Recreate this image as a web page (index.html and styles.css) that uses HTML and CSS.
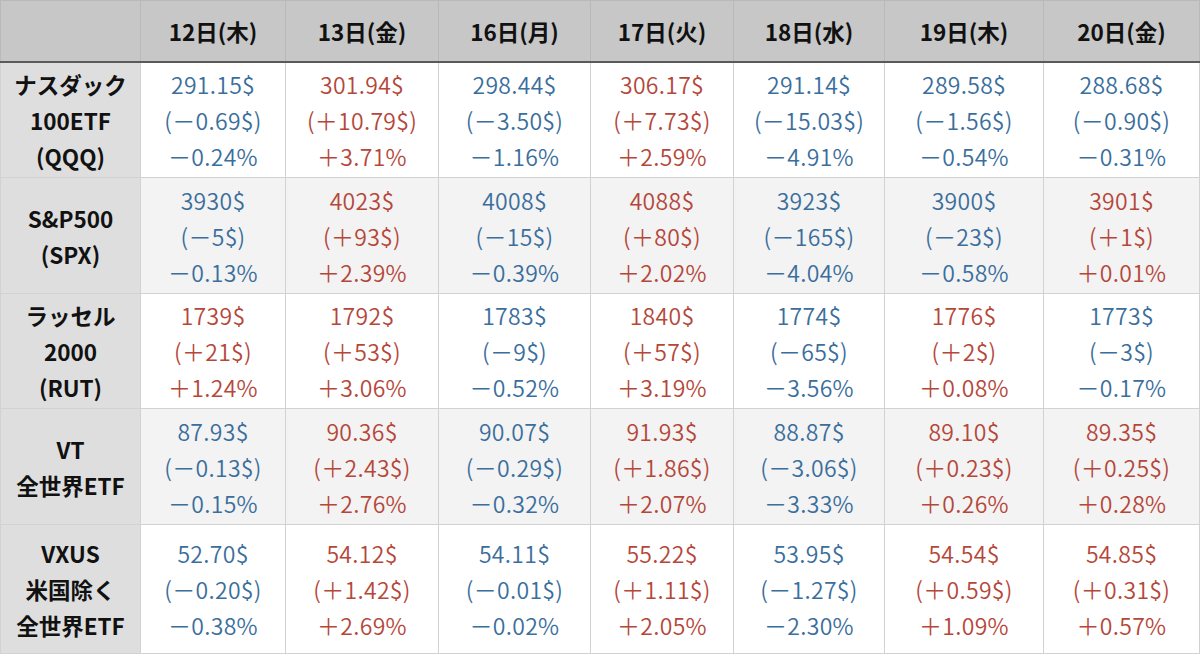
FILE: index.html
```html
<!DOCTYPE html>
<html lang="ja">
<head>
<meta charset="utf-8">
<link rel="stylesheet" href="styles.css">
</head>
<body>
<table class="grid">
<colgroup>
<col class="c0"><col class="c1"><col class="c2"><col class="c3"><col class="c4"><col class="c5"><col class="c6"><col class="c7">
</colgroup>
<thead>
<tr class="head">
<th class="corner"></th>
<th>12日(木)</th><th>13日(金)</th><th>16日(月)</th><th>17日(火)</th><th>18日(水)</th><th>19日(木)</th><th>20日(金)</th>
</tr>
</thead>
<tbody>
<tr class="r1">
<th class="label">ナスダック<br>100ETF<br>(QQQ)</th>
<td class="dn">291.15$<br>(－0.69$)<br>－0.24%</td>
<td class="up">301.94$<br>(＋10.79$)<br>＋3.71%</td>
<td class="dn">298.44$<br>(－3.50$)<br>－1.16%</td>
<td class="up">306.17$<br>(＋7.73$)<br>＋2.59%</td>
<td class="dn">291.14$<br>(－15.03$)<br>－4.91%</td>
<td class="dn">289.58$<br>(－1.56$)<br>－0.54%</td>
<td class="dn">288.68$<br>(－0.90$)<br>－0.31%</td>
</tr>
<tr class="r2 alt">
<th class="label">S&amp;P500<br>(SPX)</th>
<td class="dn">3930$<br>(－5$)<br>－0.13%</td>
<td class="up">4023$<br>(＋93$)<br>＋2.39%</td>
<td class="dn">4008$<br>(－15$)<br>－0.39%</td>
<td class="up">4088$<br>(＋80$)<br>＋2.02%</td>
<td class="dn">3923$<br>(－165$)<br>－4.04%</td>
<td class="dn">3900$<br>(－23$)<br>－0.58%</td>
<td class="up">3901$<br>(＋1$)<br>＋0.01%</td>
</tr>
<tr class="r3">
<th class="label">ラッセル<br>2000<br>(RUT)</th>
<td class="up">1739$<br>(＋21$)<br>＋1.24%</td>
<td class="up">1792$<br>(＋53$)<br>＋3.06%</td>
<td class="dn">1783$<br>(－9$)<br>－0.52%</td>
<td class="up">1840$<br>(＋57$)<br>＋3.19%</td>
<td class="dn">1774$<br>(－65$)<br>－3.56%</td>
<td class="up">1776$<br>(＋2$)<br>＋0.08%</td>
<td class="dn">1773$<br>(－3$)<br>－0.17%</td>
</tr>
<tr class="r4 alt">
<th class="label">VT<br>全世界ETF</th>
<td class="dn">87.93$<br>(－0.13$)<br>－0.15%</td>
<td class="up">90.36$<br>(＋2.43$)<br>＋2.76%</td>
<td class="dn">90.07$<br>(－0.29$)<br>－0.32%</td>
<td class="up">91.93$<br>(＋1.86$)<br>＋2.07%</td>
<td class="dn">88.87$<br>(－3.06$)<br>－3.33%</td>
<td class="up">89.10$<br>(＋0.23$)<br>＋0.26%</td>
<td class="up">89.35$<br>(＋0.25$)<br>＋0.28%</td>
</tr>
<tr class="r5">
<th class="label">VXUS<br>米国除く<br>全世界ETF</th>
<td class="dn">52.70$<br>(－0.20$)<br>－0.38%</td>
<td class="up">54.12$<br>(＋1.42$)<br>＋2.69%</td>
<td class="dn">54.11$<br>(－0.01$)<br>－0.02%</td>
<td class="up">55.22$<br>(＋1.11$)<br>＋2.05%</td>
<td class="dn">53.95$<br>(－1.27$)<br>－2.30%</td>
<td class="up">54.54$<br>(＋0.59$)<br>＋1.09%</td>
<td class="up">54.85$<br>(＋0.31$)<br>＋0.57%</td>
</tr>
</tbody>
</table>
</body>
</html>
```
FILE: styles.css
```css
html, body {
  margin: 0;
  padding: 0;
  background: #ffffff;
}
body {
  font-family: "Noto Sans CJK JP", "Noto Sans", sans-serif;
}
.grid {
  border-collapse: collapse;
  table-layout: fixed;
  width: 1199px;
}
.c0 { width: 140px; }
.c1 { width: 145px; }
.c2 { width: 153px; }
.c3 { width: 152px; }
.c4 { width: 143px; }
.c5 { width: 151px; }
.c6 { width: 159px; }
.c7 { width: 156px; }

.grid th, .grid td {
  border: 1px solid #d2d2d2;
  padding: 0;
  text-align: center;
  vertical-align: middle;
  font-size: 22.5px;
  line-height: 36px;
}
.head th {
  background: #c7c7c7;
  color: #111;
  font-weight: 700;
  height: 60px;
  border-color: #b9b9b9;
  border-bottom: 2px solid #5a5a5a;
}
.label {
  background: #dedede;
  color: #111;
  font-weight: 700;
}
.grid td {
  font-weight: 350;
  font-size: 23px;
  letter-spacing: 0.3px;
  background: #ffffff;
}
.alt td {
  background: #f3f3f3;
}
.up { color: #b5473a; }
.dn { color: #3a6e9c; }
.r1 th, .r1 td { height: 114px; }
.r2 th, .r2 td { height: 115px; }
.r3 th, .r3 td { height: 114px; }
.r4 th, .r4 td { height: 115px; }
.r5 th, .r5 td { height: 128px; }
```
